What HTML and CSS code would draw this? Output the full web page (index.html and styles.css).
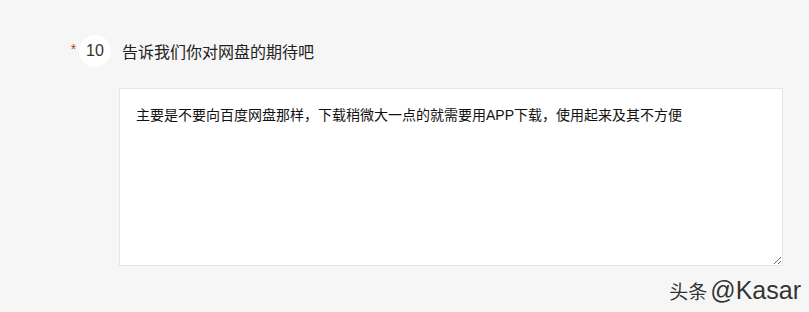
FILE: index.html
```html
<!DOCTYPE html>
<html lang="zh-CN">
<head>
<meta charset="utf-8">
<link rel="stylesheet" href="styles.css">
</head>
<body>
<div class="page">
  <div class="question">
    <div class="q-head">
      <span class="star">*</span>
      <span class="num">10</span>
      <span class="title">告诉我们你对网盘的期待吧</span>
    </div>
    <div class="answer">
      <textarea class="box" readonly>主要是不要向百度网盘那样，下载稍微大一点的就需要用APP下载，使用起来及其不方便</textarea>
    </div>
  </div>
  <div class="mark"><span class="mark-cn">头条</span><span class="mark-en">@Kasar</span></div>
</div>
</body>
</html>
```
FILE: styles.css
```css
html, body {
  margin: 0;
  padding: 0;
  background: #f6f6f6;
}
.page {
  width: 809px;
  height: 312px;
  position: relative;
  overflow: hidden;
  font-family: "Liberation Sans", "Noto Sans CJK SC", sans-serif;
  color: #222;
}
.question {
  padding: 35px 0 0 68px;
}
.q-head {
  display: flex;
  align-items: center;
  height: 32px;
}
.star {
  color: #c0392b;
  font-size: 14px;
  width: 11px;
  margin-top: -4px;
  text-align: center;
}
.num {
  width: 32px;
  height: 32px;
  border-radius: 50%;
  background: #fff;
  display: flex;
  align-items: center;
  justify-content: center;
  font-size: 16px;
  color: #333;
}
.title {
  margin-left: 11px;
  font-size: 16px;
  font-family: "Noto Sans CJK SC", sans-serif;
  color: #222;
}
.answer {
  padding: 21px 27px 0 51px;
}
.box {
  display: block;
  box-sizing: border-box;
  width: 664px;
  height: 178px;
  margin: 0;
  border: 1px solid #e6e6e6;
  background: #fff;
  padding: 16px 16px;
  font-family: "Liberation Sans", "Noto Sans CJK SC", sans-serif;
  font-size: 14px;
  line-height: 20px;
  color: #111;
  resize: both;
  outline: none;
}
.mark {
  position: absolute;
  right: 8px;
  bottom: 7px;
  display: flex;
  align-items: baseline;
  gap: 3px;
  color: #333;
  text-shadow: 0 0 1px #fff, 0 0 2px #fff;
}
.mark-cn {
  font-family: "Noto Sans CJK SC", sans-serif;
  font-size: 19px;
}
.mark-en {
  font-family: "Liberation Sans", sans-serif;
  font-size: 25px;
}
```
